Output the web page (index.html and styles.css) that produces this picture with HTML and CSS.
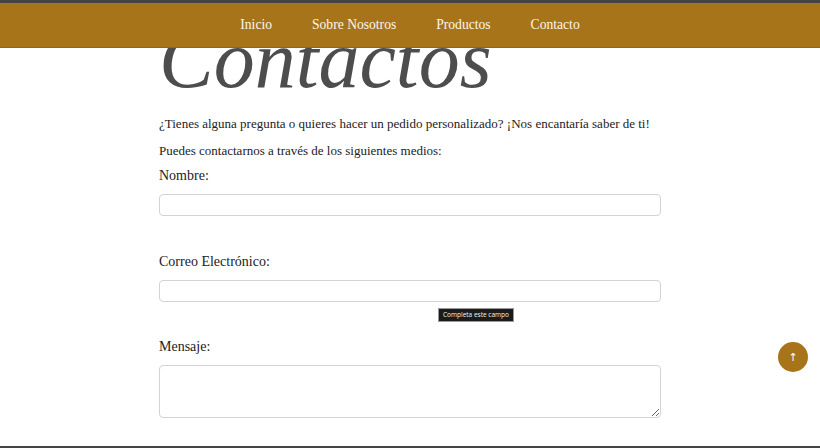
FILE: index.html
```html
<!DOCTYPE html>
<html lang="es">
<head>
    <meta charset="UTF-8">
    <meta name="viewport" content="width=device-width, initial-scale=1.0">
    <title>Contactos</title>
    <link rel="stylesheet" href="styles.css">
</head>
<body>
    <nav class="navbar">
        <a href="#" class="nav-link">Inicio</a>
        <a href="#" class="nav-link">Sobre Nosotros</a>
        <a href="#" class="nav-link">Productos</a>
        <a href="#" class="nav-link">Contacto</a>
    </nav>
    <main class="contact">
        <h1 class="contact-title">Contactos</h1>
        <p class="contact-text">¿Tienes alguna pregunta o quieres hacer un pedido personalizado? ¡Nos encantaría saber de ti!</p>
        <p class="contact-text">Puedes contactarnos a través de los siguientes medios:</p>
        <form class="contact-form">
            <div class="field field-first">
                <label for="nombre">Nombre:</label>
                <input type="text" id="nombre" class="input">
            </div>
            <div class="field">
                <label for="correo">Correo Electrónico:</label>
                <input type="email" id="correo" class="input">
                <span class="tooltip">Completa este campo</span>
            </div>
            <div class="field field-last">
                <label for="mensaje">Mensaje:</label>
                <textarea id="mensaje" class="input textarea"></textarea>
            </div>
        </form>
    </main>
    <footer class="footer"></footer>
    <a href="#" class="to-top">↑</a>
</body>
</html>
```

FILE: styles.css
```css
*{
    margin:0;
    padding:0;
    box-sizing: border-box;
}
body{
    background-color: #fff;
    font-family: "Liberation Serif", serif;
    color: #222;
}
.navbar{
    position: fixed;
    top: 0;
    left: 0;
    width: 100%;
    height: 48px;
    border-top: 3px solid #444;
    border-bottom: 1px solid #976612;
    background-color: #a8741a;
    display: flex;
    justify-content: center;
    align-items: center;
    z-index: 10;
}
.nav-link{
    color: #fbf6ea;
    text-decoration: none;
    font-size: 13.6px;
    padding: 0 20px;
}
.contact{
    width: 502px;
    margin: 0 auto;
    padding-top: 20px;
}
.contact-title{
    font-size: 82px;
    line-height: 80px;
    font-style: italic;
    font-weight: normal;
    color: #4d4d4d;
    margin-bottom: 10px;
}
.contact-text{
    font-size: 13px;
    line-height: 27px;
}
.field{
    position: relative;
    margin-bottom: 33px;
}
.field-first{
    margin-bottom: 34px;
}
.field-last{
    margin-bottom: 28px;
}
.field label{
    display: block;
    font-size: 14px;
    line-height: 24px;
    margin-bottom: 6px;
}
.input{
    display: block;
    width: 100%;
    height: 22px;
    border: 1px solid #d3d3d3;
    border-radius: 4px;
    font-family: inherit;
}
.textarea{
    height: 53px;
    resize: vertical;
}
.tooltip{
    position: absolute;
    left: 279px;
    top: 58px;
    background-color: #1b1b1b;
    border: 1px solid #9a9a9a;
    color: #f2f2f2;
    font-family: "Open Sans", sans-serif;
    font-size: 6.5px;
    line-height: 12px;
    padding: 0 4px;
}
.footer{
    height: 40px;
    background-color: #444;
}
.to-top{
    position: fixed;
    right: 12px;
    bottom: 76px;
    width: 30px;
    height: 30px;
    border-radius: 50%;
    background-color: #a8741a;
    color: #fff;
    text-decoration: none;
    font-family: "DejaVu Sans", sans-serif;
    font-size: 11px;
    display: flex;
    justify-content: center;
    align-items: center;
}
```
